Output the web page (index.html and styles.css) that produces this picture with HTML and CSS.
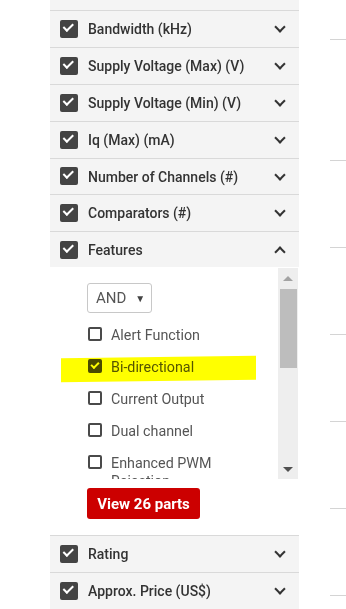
FILE: index.html
```html
<!DOCTYPE html>
<html lang="en">
<head>
  <meta charset="UTF-8" />
  <title>Parametric filters</title>
  <link rel="stylesheet" href="styles.css">
</head>
<body>
  <div class="page">
    <div class="filters">
      <div class="strip"></div>

      <div class="row"><span class="box"></span><span class="name">Bandwidth (kHz)</span><span class="chev"></span></div>
      <div class="row"><span class="box"></span><span class="name">Supply Voltage (Max) (V)</span><span class="chev"></span></div>
      <div class="row"><span class="box"></span><span class="name">Supply Voltage (Min) (V)</span><span class="chev"></span></div>
      <div class="row"><span class="box"></span><span class="name">Iq (Max) (mA)</span><span class="chev"></span></div>
      <div class="row short"><span class="box"></span><span class="name">Number of Channels (#)</span><span class="chev"></span></div>
      <div class="row"><span class="box"></span><span class="name">Comparators (#)</span><span class="chev"></span></div>
      <div class="row"><span class="box"></span><span class="name">Features</span><span class="chev up"></span></div>

      <div class="panel">
        <div class="scroller">
          <div class="opts">
            <div class="select">AND <span class="caret">&#9660;</span></div>
            <label class="opt"><span class="cb"></span><span>Alert Function</span></label>
            <label class="opt marked"><span class="cb on"></span><span>Bi-directional</span><span class="marker"></span></label>
            <label class="opt"><span class="cb"></span><span>Current Output</span></label>
            <label class="opt"><span class="cb"></span><span>Dual channel</span></label>
            <label class="opt"><span class="cb"></span><span>Enhanced PWM Rejection</span></label>
          </div>
          <div class="sbar">
            <span class="arr"></span>
            <span class="thumb"></span>
            <span class="fill"></span>
            <span class="arr down"></span>
          </div>
        </div>
        <button class="view">View 26 parts</button>
      </div>

      <div class="row"><span class="box"></span><span class="name">Rating</span><span class="chev"></span></div>
      <div class="row"><span class="box"></span><span class="name">Approx. Price (US$)</span><span class="chev"></span></div>
    </div>

    <div class="rules">
      <div class="rule first"></div>
      <div class="rule"></div>
      <div class="rule"></div>
      <div class="rule"></div>
      <div class="rule"></div>
      <div class="rule"></div>
      <div class="rule"></div>
    </div>
  </div>
</body>
</html>
```

FILE: styles.css
```css
body {
  margin: 0;
  background: #fff;
  font-family: Roboto, "Liberation Sans", sans-serif;
  overflow: hidden;
}
.page { display: flex; padding-left: 50px; }
.filters { width: 249px; background: #f4f4f4; }
.strip { height: 10px; }

.row {
  height: 36px;
  border-top: 1px solid #d9d9d9;
  display: flex;
  align-items: center;
  padding: 0 13px 0 10px;
}
.row.short { height: 35px; }
.box {
  width: 18px; height: 18px;
  background: #444;
  border-radius: 2px;
  position: relative;
  margin-top: -1px;
}
.box::after {
  content: "";
  position: absolute;
  left: 4px; top: 3px;
  width: 8px; height: 4px;
  border-left: 2px solid #fff;
  border-bottom: 2px solid #fff;
  transform: rotate(-45deg);
  transform-origin: 5px 4px;
}
.name { flex: 1; margin-left: 10px; font-size: 14px; font-weight: 500; color: #333; }
.chev {
  width: 6px; height: 6px;
  border-right: 2px solid #333;
  border-bottom: 2px solid #333;
  transform: rotate(45deg);
  margin: -4px 2px 0 0;
}
.chev.up { transform: rotate(-135deg); margin-top: 4px; }

.panel { background: #fff; padding-bottom: 16px; border-top: 1px solid #fff; margin-top: -1px; }
.scroller { display: flex; height: 211px; overflow: hidden; }
.opts { width: 191px; padding: 15px 0 0 37px; }
.select {
  height: 28px; width: 55px;
  border: 1px solid #c8c8c8;
  border-radius: 3px;
  display: flex; align-items: center;
  padding-left: 8px;
  font-size: 15px; color: #555;
  margin-bottom: 6px;
}
.caret { font-size: 10px; margin-left: 9px; color: #444; }
.opt {
  display: flex; align-items: flex-start;
  padding: 7px 0;
  font-size: 14.3px; line-height: 18px; color: #555;
  position: relative;
  width: 130px;
}
.cb {
  flex: none;
  width: 10px; height: 10px;
  border: 2px solid #4a4a4a;
  border-radius: 2px;
  margin: 1px 9px 0 1px;
  position: relative;
}
.cb.on { background: #4a4a4a; }
.cb.on::after {
  content: "";
  position: absolute;
  left: 1px; top: 1px;
  width: 6px; height: 3px;
  border-left: 2px solid #fff;
  border-bottom: 2px solid #fff;
  transform: rotate(-45deg);
}
.marker {
  position: absolute;
  left: -26px; top: 6px;
  width: 195px; height: 24px;
  background: #ffff00;
  mix-blend-mode: multiply;
  transform: skewY(-0.8deg);
}

.sbar {
  width: 20px;
  background: #eeeeee;
  display: flex; flex-direction: column; align-items: center;
}
.arr {
  width: 0; height: 0;
  border-left: 5px solid transparent;
  border-right: 5px solid transparent;
  border-bottom: 5px solid #a3a3a3;
  margin: 8px 0 8px;
}
.arr.down { border-bottom: 0; border-top: 5px solid #505050; margin: 6px 0 7px; }
.thumb { width: 17px; height: 79px; background: #bdbdbd; }
.fill { flex: 1; }

.view {
  margin: 9px 0 0 37px;
  width: 113px; height: 31px;
  border: 0; border-radius: 3px;
  background: #cc0000; color: #fff;
  font-family: Roboto, "Liberation Sans", sans-serif;
  font-size: 15px; font-weight: 700;
}

.rules { margin-left: 31px; width: 16px; padding-top: 39px; }
.rule { height: 1px; background: #d4d4d4; margin-bottom: 86px; }
.rule.first { margin-bottom: 120px; }
```
